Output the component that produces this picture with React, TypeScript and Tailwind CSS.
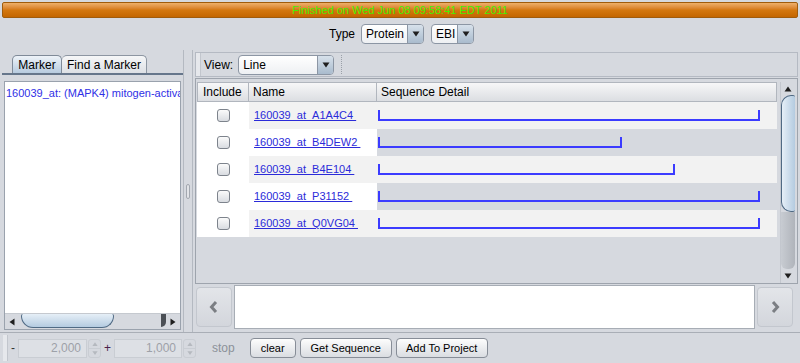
import type { ReactNode } from 'react';

const font = "font-['Liberation_Sans',Arial,sans-serif]";

type Dir = 'up' | 'down' | 'left' | 'right';

const Tri = ({ dir, color = '#1f1f1f', size = 8 }: { dir: Dir; color?: string; size?: number }) => {
  const pts = {
    up: '0.5,6.5 4,1.5 7.5,6.5',
    down: '0.5,1.5 7.5,1.5 4,6.5',
    left: '6.5,0.5 6.5,7.5 1.5,4',
    right: '1.5,0.5 1.5,7.5 6.5,4',
  }[dir];
  return (
    <svg width={size} height={size} viewBox="0 0 8 8">
      <polygon points={pts} fill={color} />
    </svg>
  );
};

const Chevron = ({ dir }: { dir: 'left' | 'right' }) => (
  <svg width="12" height="14" viewBox="0 0 12 14">
    <path
      d={dir === 'left' ? 'M8 2 L3.5 7 L8 12' : 'M4 2 L8.5 7 L4 12'}
      fill="none"
      stroke="#7b7e83"
      strokeWidth={3}
      strokeLinejoin="miter"
    />
  </svg>
);

function Combo({ label, width }: { label: string; width: string }) {
  return (
    <div
      className={`flex h-[20px] ${width} overflow-hidden rounded-[4px] border border-[#8c96a4] bg-linear-to-b from-white to-[#eef0f3]`}
    >
      <div className="flex flex-1 items-center pl-[4px] text-[12px]">{label}</div>
      <div className="flex w-[16px] items-center justify-center border-l border-[#8c96a4] bg-linear-to-b from-[#d7e1eb] to-[#a9bbcd]">
        <Tri dir="down" size={8} />
      </div>
    </div>
  );
}

function Checkbox() {
  return (
    <div className="h-[13px] w-[13px] rounded-[3px] border border-[#7d838c] bg-linear-to-b from-[#fbfbfb] to-[#d9dce1]" />
  );
}

function Button({ children, width }: { children: ReactNode; width: string }) {
  return (
    <div
      className={`flex h-[20px] ${width} items-center justify-center rounded-[4px] border border-[#878d97] bg-linear-to-b from-[#fdfdfd] to-[#dadde2] text-[11px]`}
    >
      {children}
    </div>
  );
}

function Spinner({ value, width }: { value: string; width: string }) {
  return (
    <div className="flex h-[19px] items-stretch">
      <div
        className={`flex ${width} items-center justify-end border border-[#c9cdd3] bg-[#dde0e5] pr-[5px] text-[12px] text-[#9da1a8]`}
      >
        {value}
      </div>
      <div className="ml-[1px] flex w-[13px] flex-col overflow-hidden rounded-[3px] border border-[#c9cdd3]">
        <div className="flex flex-1 items-center justify-center border-b border-[#c9cdd3]">
          <Tri dir="up" color="#b5b9bf" size={6} />
        </div>
        <div className="flex flex-1 items-center justify-center">
          <Tri dir="down" color="#b5b9bf" size={6} />
        </div>
      </div>
    </div>
  );
}

const rows = [
  { name: '160039_at_A1A4C4', line: 'w-[382px]', odd: true },
  { name: '160039_at_B4DEW2', line: 'w-[244px]', odd: false },
  { name: '160039_at_B4E104', line: 'w-[297px]', odd: true },
  { name: '160039_at_P31152', line: 'w-[382px]', odd: false },
  { name: '160039_at_Q0VG04', line: 'w-[382px]', odd: true },
];

export default function App() {
  return (
    <div className={`flex h-[363px] w-[800px] flex-col overflow-hidden bg-[#d6d9df] text-[11px] text-black ${font}`}>
      {/* progress bar */}
      <div className="mx-[2px] mt-[2px] flex h-[16px] items-center justify-center rounded-[2px] border border-[#a05c0c] bg-linear-to-b from-[#eeb06a] via-[#d4780f] to-[#c46600] text-[11px] text-[#44f000]">
        Finished on Wed Jun 08 09:58:41 EDT 2011
      </div>

      {/* type row */}
      <div className="flex h-[32px] items-center justify-center pl-[3px]">
        <span className="mr-[6px] text-[12px]">Type</span>
        <Combo label="Protein" width="w-[63px]" />
        <div className="w-[7px]" />
        <Combo label="EBI" width="w-[43px]" />
      </div>

      {/* main area */}
      <div className="flex h-[282px]">
        {/* left panel */}
        <div className="flex w-[183px] flex-col">
          <div className="flex h-[23px] items-end pl-[12px]">
            <div className="flex h-[18px] w-[50px] items-center justify-center rounded-t-[5px] border border-b-0 border-[#7f8a98] bg-linear-to-b from-[#eef3f8] to-[#b7cbdf] text-[12px]">
              Marker
            </div>
            <div className="flex h-[18px] w-[85px] items-center justify-center rounded-t-[5px] border border-b-0 border-l-0 border-[#8d96a2] bg-linear-to-b from-[#f6f7f8] to-[#dde0e5] text-[12px]">
              Find a Marker
            </div>
          </div>
          <div className="ml-[2px] h-[2px] bg-[#66768b]" />
          <div className="ml-[4px] mt-[6px] flex h-[249px] w-[177px] flex-col border border-[#9aa2ad] bg-white">
            <div className="flex-1 overflow-hidden whitespace-nowrap pl-[1px] pt-[3px] text-[11px] text-[#3030e6]">
              160039_at: (MAPK4) mitogen-activa
            </div>
            <div className="flex h-[16px] items-center border-t border-[#c5c9cf] bg-[#d6d9df]">
              <div className="flex w-[14px] justify-center">
                <Tri dir="left" size={8} />
              </div>
              <div className="ml-[2px] h-[14px] w-[93px] self-start rounded-b-[12px] rounded-t-[2px] border border-t-0 border-[#506a84] bg-linear-to-b from-[#e6eff7] to-[#b4cbe0]" />
              <div className="flex-1" />
              <div className="h-[13px] w-[5px] self-start rounded-br-[6px] bg-[#4b4f55]" />
              <div className="flex w-[14px] justify-center">
                <Tri dir="right" size={8} />
              </div>
            </div>
          </div>
        </div>

        {/* divider */}
        <div className="flex w-[10px] items-center justify-center border-l border-r border-[#b4b9c1]">
          <div className="h-[15px] w-[4px] rounded-[2px] border border-[#a3a8b0] bg-[#e2e4e8]" />
        </div>

        {/* right panel */}
        <div className="flex flex-1 flex-col px-[2px]">
          {/* toolbar */}
          <div className="mt-[2px] flex h-[25px] items-center border border-[#b5bac3]">
            <div className="h-full w-[5px] border-r border-[#c2c6cd] bg-[#e6e8ec]" />
            <span className="ml-[3px] text-[12px]">View:</span>
            <div className="ml-[5px]">
              <Combo label="Line" width="w-[96px]" />
            </div>
            <div className="ml-[7px] h-[19px] border-l border-dotted border-[#9aa0a8]" />
          </div>

          {/* table */}
          <div className="mt-[1px] flex h-[206px] border border-[#9ea4ad] pl-[1px] pt-[3px]">
            <div className="flex w-[580px] flex-col">
              <div className="flex h-[20px] border-b border-t border-[#b1b6be] bg-linear-to-b from-[#f7f7f8] to-[#dcdee2] text-[12px] leading-none">
                <div className="flex w-[52px] items-center border-l border-r border-[#b1b6be] pl-[5px]">Include</div>
                <div className="flex w-[128px] items-center border-r border-[#b1b6be] pl-[4px]">Name</div>
                <div className="flex flex-1 items-center border-r border-[#b1b6be] pl-[4px]">Sequence Detail</div>
              </div>
              {rows.map((r) => (
                <div key={r.name} className="flex h-[27px]">
                  <div className="flex w-[52px] items-center justify-center bg-white">
                    <Checkbox />
                  </div>
                  <div className={`flex w-[128px] items-center pl-[5px] ${r.odd ? 'bg-[#f2f2f2]' : 'bg-white'}`}>
                    <span className="whitespace-pre text-[11px] text-[#2b2bd9] underline underline-offset-[1px]">
                      {r.name + ' '}
                    </span>
                  </div>
                  <div className={`flex-1 pl-[1px] ${r.odd ? 'bg-[#f2f2f2]' : 'bg-[#d6d9df]'}`}>
                    <div className={`mt-[8px] h-[11px] ${r.line} border-b-2 border-l-2 border-r-2 border-[#3b3bff]`} />
                  </div>
                </div>
              ))}
            </div>
            {/* vertical scrollbar */}
            <div className="ml-[3px] flex h-[201px] w-[15px] flex-col border-l border-[#c3c7ce]">
              <div className="flex h-[13px] items-center justify-center">
                <Tri dir="up" size={8} />
              </div>
              <div className="h-[117px] rounded-l-[10px] rounded-r-[2px] border border-r-0 border-[#506a84] bg-linear-to-r from-[#e6eff7] to-[#b4cbe0]" />
              <div className="flex-1 rounded-b-[6px] bg-linear-to-r from-[#c8ccd2] to-[#b0b4bb]" />
              <div className="flex h-[14px] items-center justify-center">
                <Tri dir="down" size={8} />
              </div>
            </div>
          </div>

          {/* bottom row */}
          <div className="mt-[1px] flex h-[44px] items-center">
            <div className="ml-[1px] flex h-[40px] w-[36px] items-center justify-center rounded-[4px] border border-[#c3c7ce] bg-linear-to-b from-[#e3e5e9] to-[#d3d6dc]">
              <Chevron dir="left" />
            </div>
            <div className="ml-[2px] h-[44px] w-[521px] border border-[#a7adb5] bg-white" />
            <div className="ml-[2px] flex h-[40px] w-[36px] items-center justify-center rounded-[4px] border border-[#c3c7ce] bg-linear-to-b from-[#e3e5e9] to-[#d3d6dc]">
              <Chevron dir="right" />
            </div>
          </div>
        </div>
      </div>

      {/* bottom toolbar */}
      <div className="flex h-[31px] items-center border-t border-[#a9aeb6] pl-[3px]">
        <div className="h-[26px] w-[5px] border-r border-[#c2c6cd] bg-[#e6e8ec]" />
        <span className="w-[10px] text-center text-[12px] text-[#333]">-</span>
        <Spinner value="2,000" width="w-[69px]" />
        <span className="w-[13px] text-center text-[12px] text-[#4a1f4a]">+</span>
        <Spinner value="1,000" width="w-[68px]" />
        <span className="ml-[16px] text-[12px] text-[#8c9199]">stop</span>
        <div className="ml-[15px]">
          <Button width="w-[46px]">clear</Button>
        </div>
        <div className="ml-[4px]">
          <Button width="w-[92px]">Get Sequence</Button>
        </div>
        <div className="ml-[4px]">
          <Button width="w-[92px]">Add To Project</Button>
        </div>
      </div>
    </div>
  );
}
